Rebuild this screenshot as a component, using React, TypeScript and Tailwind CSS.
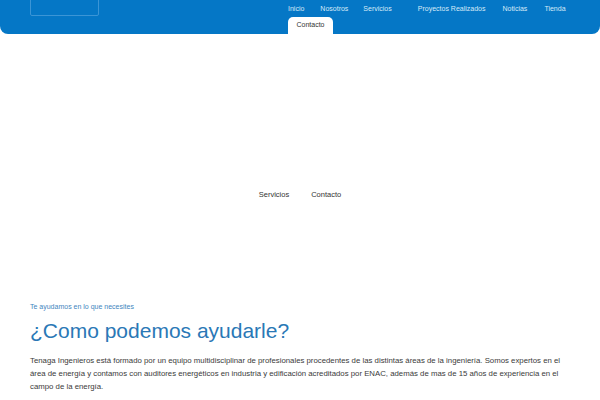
export default function App() {
  const font = { fontFamily: '"Liberation Sans", Arial, sans-serif' }
  return (
    <div className="w-[600px] h-[400px] bg-white overflow-hidden text-[#333]" style={font}>
      {/* Header */}
      <div className="h-[34px] bg-[#0577c6] rounded-b-[8px] flex">
        <div className="ml-[30px] w-[69px] h-[17px] -mt-[1px] border border-[#3b95d6] rounded-b-[2px]" />
        <div className="ml-[189px] flex flex-col">
          <div className="flex h-[17px] items-center text-[7px] text-[#d6eaf8] pt-[1px]">
            <span>Inicio</span>
            <span className="ml-[16px]">Nosotros</span>
            <span className="ml-[15px]">Servicios</span>
            <span className="ml-[26px]">Proyectos Realizados</span>
            <span className="ml-[17px]">Noticias</span>
            <span className="ml-[17px]">Tienda</span>
          </div>
          <div className="flex">
            <div className="w-[45px] h-[17px] bg-white rounded-t-[5px] flex items-center justify-center text-[7px] text-[#333]">
              Contacto
            </div>
          </div>
        </div>
      </div>

      {/* Hero links */}
      <div className="h-[256px] pt-[66px] flex items-center justify-center gap-[22px] text-[7.5px] text-[#333]">
        <span>Servicios</span>
        <span>Contacto</span>
      </div>

      {/* Intro */}
      <div className="px-[30px] pt-[12px]">
        <div className="text-[7px] leading-[10px] text-[#3f86c0]">Te ayudamos en lo que necesites</div>
        <h1 className="mt-[6px] text-[21px] leading-[26px] text-[#2a78b6]">¿Como podemos ayudarle?</h1>
        <p className="mt-[10px] text-[7.8px] leading-[13px] text-[#3a3a3a]">
          Tenaga Ingenieros está formado por un equipo multidisciplinar de profesionales procedentes de las distintas áreas de la ingeniería. Somos expertos en el área de energía y contamos con auditores energéticos en industria y edificación acreditados por ENAC, además de mas de 15 años de experiencia en el campo de la energía.
        </p>
      </div>
    </div>
  )
}
